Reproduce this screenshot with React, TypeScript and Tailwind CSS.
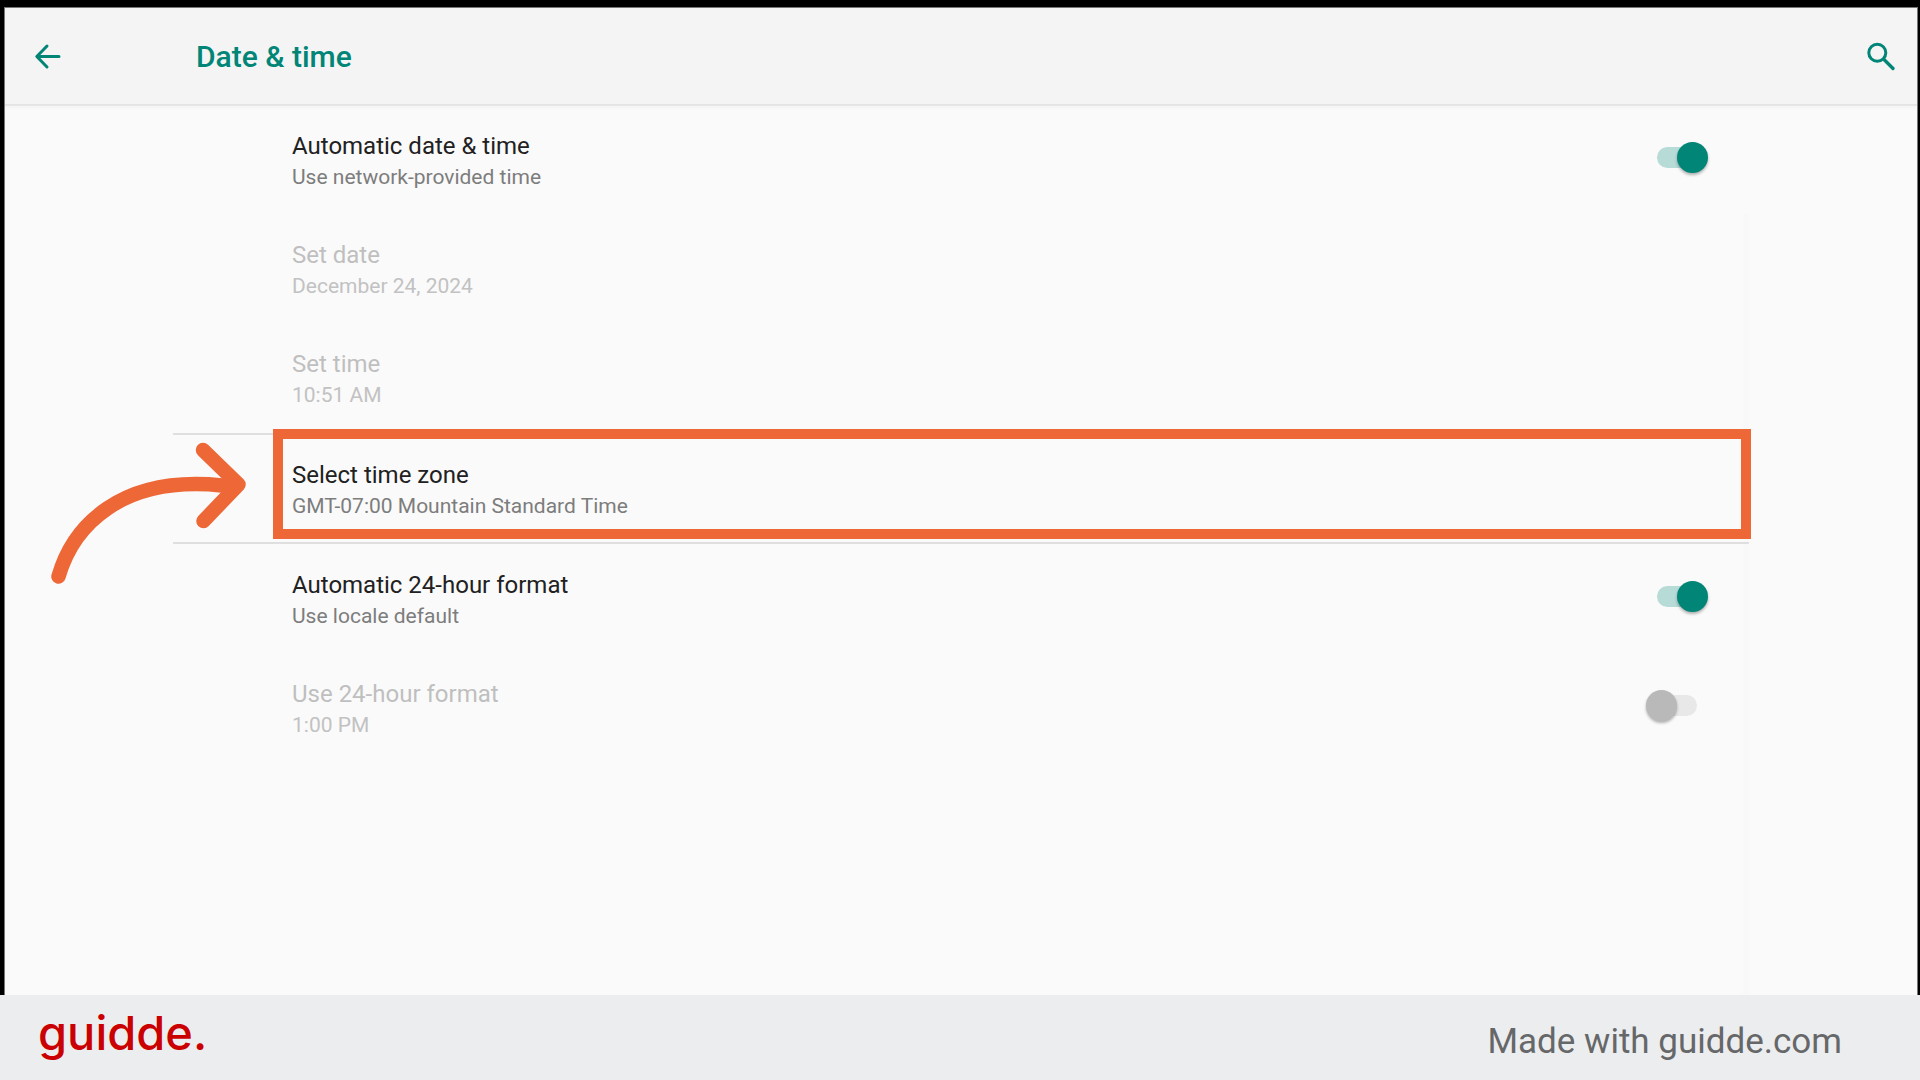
import React from "react";
import clsx from "clsx";

interface Setting {
	id: string;
	title: string;
	summary: string;
	disabled?: boolean;
	checked?: boolean;
	divided?: boolean;
}

const settings: Setting[] = [
	{
		id: "auto-date",
		title: "Automatic date & time",
		summary: "Use network-provided time",
		checked: true,
	},
	{
		id: "set-date",
		title: "Set date",
		summary: "December 24, 2024",
		disabled: true,
	},
	{ id: "set-time", title: "Set time", summary: "10:51 AM", disabled: true },
	{
		id: "time-zone",
		title: "Select time zone",
		summary: "GMT-07:00 Mountain Standard Time",
		divided: true,
	},
	{
		id: "auto-24",
		title: "Automatic 24-hour format",
		summary: "Use locale default",
		checked: true,
	},
	{
		id: "use-24",
		title: "Use 24-hour format",
		summary: "1:00 PM",
		disabled: true,
		checked: false,
	},
];

const Switch: React.FC<{ id: string; checked: boolean; disabled?: boolean }> = ({
	id,
	checked,
	disabled,
}) => (
	<input
		id={id}
		type="checkbox"
		role="switch"
		defaultChecked={checked}
		disabled={disabled}
		className="relative mb-1 h-[31px] w-[62px] shrink-0 appearance-none before:absolute before:inset-x-[11px] before:inset-y-[5px] before:rounded-full before:bg-[#e8e8e8] before:content-[''] after:absolute after:left-0 after:top-0 after:size-[31px] after:rounded-full after:bg-[#b9b9b9] after:shadow-[0_2px_3px_rgba(0,0,0,0.3)] after:content-[''] checked:before:bg-[#b7dbd7] checked:after:left-[31px] checked:after:bg-[#008577]"
	/>
);

const RowText: React.FC<{ setting: Setting }> = ({ setting }) => (
	<span className="flex flex-col pt-1 text-left">
		<span
			className={clsx(
				"text-[24px] leading-[31px]",
				setting.disabled ? "text-[#bfbfbf]" : "text-[#212121]",
			)}
		>
			{setting.title}
		</span>
		<span
			className={clsx(
				"text-[21px] leading-[31px]",
				setting.disabled ? "text-[#c2c2c2]" : "text-[#7d7d7d]",
			)}
		>
			{setting.summary}
		</span>
	</span>
);

const SettingRow: React.FC<{ setting: Setting }> = ({ setting }) => {
	const rowClass =
		"flex w-full items-center justify-between pl-[119px] pr-[41px]";

	if (setting.checked !== undefined) {
		return (
			<label htmlFor={setting.id} className={clsx(rowClass, "h-[109px]")}>
				<RowText setting={setting} />
				<Switch
					id={setting.id}
					checked={setting.checked}
					disabled={setting.disabled}
				/>
			</label>
		);
	}

	return (
		<button
			type="button"
			disabled={setting.disabled}
			className={clsx(
				rowClass,
				setting.divided ? "h-[111px] border-y-2 border-[#dfdfdf]" : "h-[109px]",
			)}
		>
			<RowText setting={setting} />
		</button>
	);
};

// Orange frame and arrow drawn over the highlighted row
const Callout: React.FC = () => (
	<>
		<div className="pointer-events-none absolute -right-0.5 -top-1 left-[100px] h-[110px] border-[10px] border-[#ed6737]" />
		<svg
			className="pointer-events-none absolute -left-[123px] top-1.5 h-[150px] w-[170px]"
			viewBox="50 439 170 150"
			overflow="visible"
			fill="none"
			stroke="#ed6737"
			strokeWidth="14.500"
			strokeLinecap="round"
			strokeLinejoin="round"
		>
			<path d="M58.500 576.500C73 526 121 475 222 485.500" />
			<path d="M203 450l35.500 34.500L203.500 521" />
		</svg>
	</>
);

export default function App() {
	return (
		<div className="flex min-h-screen flex-col bg-black font-[Roboto,sans-serif]">
			<div className="flex grow flex-col pl-1 pr-0.5 pt-[7px]">
				<div className="relative flex grow flex-col overflow-hidden border-x border-t border-[#777] bg-[#fafafa]">
					<header className="flex h-[97px] items-center border-b border-[#e4e4e4] bg-[#f4f4f4] pl-[28px] pr-[20px] text-[#008577] shadow-[0_1px_0_#e6e6e6,0_3px_3px_#f3f3f3]">
						<button type="button" aria-label="Back">
							<svg
								className="size-8"
								viewBox="0 0 32 32"
								fill="none"
								stroke="currentColor"
								strokeWidth="3"
								strokeLinecap="round"
								strokeLinejoin="round"
							>
								<path d="M26 16.500H4.500M14 6L3.800 16.500 14 27" />
							</svg>
						</button>
						<h1 className="grow pl-[131px] pt-0.5 text-[30px] font-medium leading-9">
							Date & time
						</h1>
						<button type="button" aria-label="Search">
							<svg
								className="size-8"
								viewBox="0 0 32 32"
								fill="none"
								stroke="currentColor"
								strokeWidth="3"
								strokeLinecap="round"
							>
								<circle cx="12.300" cy="12.800" r="8.500" />
								<path d="M19 19.500l9 9" strokeWidth="3.300" />
							</svg>
						</button>
					</header>

					<main className="relative mx-[168px] grow">
						<div className="absolute bottom-0 right-0 top-[109px] w-1.5 bg-[#f8f8f8]" />
						<ul className="relative">
							{settings.map((setting) => (
								<li
									key={setting.id}
									className={clsx("relative", setting.divided && "mt-px")}
								>
									<SettingRow setting={setting} />
									{setting.divided && <Callout />}
								</li>
							))}
						</ul>
					</main>
				</div>
			</div>

			<footer className="flex h-[85px] items-center justify-between bg-[#ecedef] pl-[38px] pr-[78px]">
				<span className="pb-2.5 font-[Inter,sans-serif] text-[47px] font-medium leading-none text-[#cb0000]">
					guidde.
				</span>
				<a href="#" className="pt-2 text-[35px] leading-10 text-[#666769]">
					Made with guidde.com
				</a>
			</footer>
		</div>
	);
}
